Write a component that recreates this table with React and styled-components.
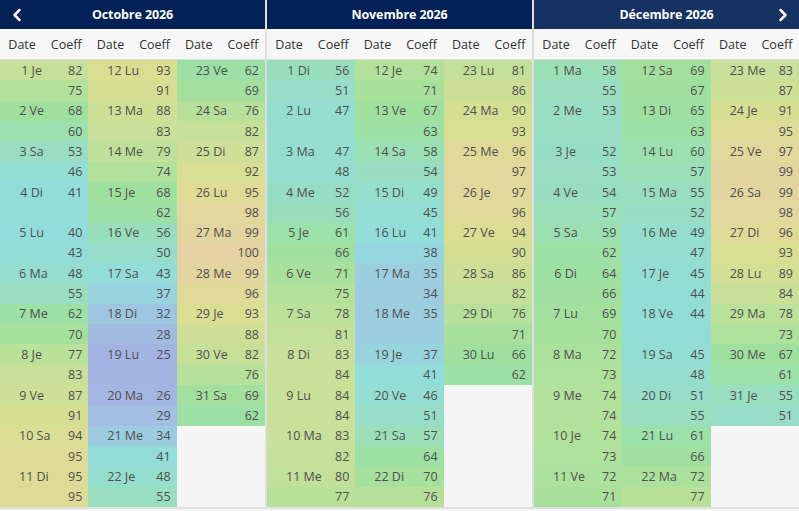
import React from "react";
import styled, { createGlobalStyle } from "styled-components";
import { ChevronLeft, ChevronRight } from "lucide-react";

const GlobalStyle = createGlobalStyle`
  html, body {
    margin: 0;
    padding: 0;
    background: #f5f5f5;
  }
  body {
    font-family: "Open Sans", "Noto Sans", Arial, sans-serif;
    -webkit-font-smoothing: antialiased;
  }
`;

// coefficient -> heatmap colour
const stops = [
  [25, [164, 180, 226]],
  [30, [161, 192, 225]],
  [35, [156, 206, 224]],
  [40, [146, 220, 220]],
  [47, [148, 221, 208]],
  [53, [152, 221, 196]],
  [58, [154, 223, 182]],
  [62, [156, 224, 166]],
  [68, [160, 224, 158]],
  [75, [180, 225, 154]],
  [82, [198, 224, 154]],
  [88, [208, 223, 150]],
  [93, [218, 222, 146]],
  [96, [224, 218, 152]],
  [99, [227, 213, 160]],
  [100, [230, 210, 162]],
];

const coeffColor = (c) => {
  if (c <= stops[0][0]) return `rgb(${stops[0][1].join(",")})`;
  for (let i = 1; i < stops.length; i++) {
    const [v1, col1] = stops[i];
    const [v0, col0] = stops[i - 1];
    if (c <= v1) {
      const t = (c - v0) / (v1 - v0);
      const rgb = col0.map((x, k) => Math.round(x + (col1[k] - x) * t));
      return `rgb(${rgb.join(",")})`;
    }
  }
  return `rgb(${stops[stops.length - 1][1].join(",")})`;
};

const months = [
  {
    name: "Octobre 2026",
    prev: true,
    days: [
      [1, "Je", 82, 75], [2, "Ve", 68, 60], [3, "Sa", 53, 46], [4, "Di", 41, null],
      [5, "Lu", 40, 43], [6, "Ma", 48, 55], [7, "Me", 62, 70], [8, "Je", 77, 83],
      [9, "Ve", 87, 91], [10, "Sa", 94, 95], [11, "Di", 95, 95],
      [12, "Lu", 93, 91], [13, "Ma", 88, 83], [14, "Me", 79, 74], [15, "Je", 68, 62],
      [16, "Ve", 56, 50], [17, "Sa", 43, 37], [18, "Di", 32, 28], [19, "Lu", 25, null],
      [20, "Ma", 26, 29], [21, "Me", 34, 41], [22, "Je", 48, 55],
      [23, "Ve", 62, 69], [24, "Sa", 76, 82], [25, "Di", 87, 92], [26, "Lu", 95, 98],
      [27, "Ma", 99, 100], [28, "Me", 99, 96], [29, "Je", 93, 88], [30, "Ve", 82, 76],
      [31, "Sa", 69, 62],
    ],
  },
  {
    name: "Novembre 2026",
    days: [
      [1, "Di", 56, 51], [2, "Lu", 47, null], [3, "Ma", 47, 48], [4, "Me", 52, 56],
      [5, "Je", 61, 66], [6, "Ve", 71, 75], [7, "Sa", 78, 81], [8, "Di", 83, 84],
      [9, "Lu", 84, 84], [10, "Ma", 83, 82], [11, "Me", 80, 77],
      [12, "Je", 74, 71], [13, "Ve", 67, 63], [14, "Sa", 58, 54], [15, "Di", 49, 45],
      [16, "Lu", 41, 38], [17, "Ma", 35, 34], [18, "Me", 35, null], [19, "Je", 37, 41],
      [20, "Ve", 46, 51], [21, "Sa", 57, 64], [22, "Di", 70, 76],
      [23, "Lu", 81, 86], [24, "Ma", 90, 93], [25, "Me", 96, 97], [26, "Je", 97, 96],
      [27, "Ve", 94, 90], [28, "Sa", 86, 82], [29, "Di", 76, 71], [30, "Lu", 66, 62],
    ],
  },
  {
    name: "Décembre 2026",
    next: true,
    active: true,
    days: [
      [1, "Ma", 58, 55], [2, "Me", 53, null], [3, "Je", 52, 53], [4, "Ve", 54, 57],
      [5, "Sa", 59, 62], [6, "Di", 64, 66], [7, "Lu", 69, 70], [8, "Ma", 72, 73],
      [9, "Me", 74, 74], [10, "Je", 74, 73], [11, "Ve", 72, 71],
      [12, "Sa", 69, 67], [13, "Di", 65, 63], [14, "Lu", 60, 57], [15, "Ma", 55, 52],
      [16, "Me", 49, 47], [17, "Je", 45, 44], [18, "Ve", 44, null], [19, "Sa", 45, 48],
      [20, "Di", 51, 55], [21, "Lu", 61, 66], [22, "Ma", 72, 77],
      [23, "Me", 83, 87], [24, "Je", 91, 95], [25, "Ve", 97, 99], [26, "Sa", 99, 98],
      [27, "Di", 96, 93], [28, "Lu", 89, 84], [29, "Ma", 78, 73], [30, "Me", 67, 61],
      [31, "Je", 55, 51],
    ],
  },
];

const Page = styled.div`
  display: grid;
  grid-template-columns: repeat(3, 1fr);
  column-gap: 2px;
  background: #dedede;
  border-bottom: 2px solid #e0e0e0;
`;

const Panel = styled.section`
  display: flex;
  flex-direction: column;
  background: #f5f5f5;
  min-width: 0;
`;

const MonthBar = styled.div`
  display: grid;
  grid-template-columns: 33px 1fr 33px;
  align-items: center;
  height: 29px;
  background: ${(p) => (p.$active ? "#153262" : "#012157")};
  color: #ffffff;
`;

const MonthTitle = styled.div`
  grid-column: 2;
  text-align: center;
  font-size: 12.5px;
  font-weight: 700;
  letter-spacing: -0.1px;
`;

const NavButton = styled.button`
  display: flex;
  align-items: center;
  justify-content: center;
  border: none;
  background: none;
  padding: 0;
  color: #ffffff;
  cursor: pointer;
  grid-column: ${(p) => (p.$side === "right" ? 3 : 1)};
  grid-row: 1;
`;

const HeadRow = styled.div`
  display: grid;
  grid-template-columns: repeat(3, 1fr);
  height: 30px;
  background: #f7f7f7;
  border-bottom: 1px solid #dcdcdc;
`;

const HeadGroup = styled.div`
  display: grid;
  grid-template-columns: 1fr 1fr;
  align-items: center;
`;

const HeadCell = styled.div`
  text-align: center;
  font-size: 12.5px;
  color: #333333;
`;

const Body = styled.div`
  display: grid;
  grid-template-columns: repeat(3, 1fr);
  align-items: start;
`;

const DayColumn = styled.div`
  display: flex;
  flex-direction: column;
`;

const Row = styled.div`
  display: grid;
  grid-template-columns: 1fr 1fr;
  align-items: center;
  height: 20.32px;
  background: ${(p) => p.$bg};
  font-size: 12.5px;
  color: #4f4f4f;
`;

const DateCell = styled.span`
  text-align: center;
  padding-left: 19px;
  white-space: nowrap;
`;

const CoeffCell = styled.span`
  text-align: right;
  padding-right: 6px;
`;

function DayRows({ day }) {
  const [num, name, c1, c2] = day;
  return (
    <>
      <Row $bg={coeffColor(c1)}>
        <DateCell>{`${num} ${name}`}</DateCell>
        <CoeffCell>{c1}</CoeffCell>
      </Row>
      <Row $bg={coeffColor(c2 ?? c1)}>
        <DateCell />
        <CoeffCell>{c2 ?? ""}</CoeffCell>
      </Row>
    </>
  );
}

function Month({ month }) {
  const cols = [month.days.slice(0, 11), month.days.slice(11, 22), month.days.slice(22)];
  return (
    <Panel>
      <MonthBar $active={month.active}>
        {month.prev && (
          <NavButton $side="left" aria-label="Mois précédent">
            <ChevronLeft size={20} strokeWidth={3} />
          </NavButton>
        )}
        <MonthTitle>{month.name}</MonthTitle>
        {month.next && (
          <NavButton $side="right" aria-label="Mois suivant">
            <ChevronRight size={20} strokeWidth={3} />
          </NavButton>
        )}
      </MonthBar>
      <HeadRow>
        {[0, 1, 2].map((i) => (
          <HeadGroup key={i}>
            <HeadCell>Date</HeadCell>
            <HeadCell>Coeff</HeadCell>
          </HeadGroup>
        ))}
      </HeadRow>
      <Body>
        {cols.map((days, i) => (
          <DayColumn key={i}>
            {days.map((d) => (
              <DayRows key={d[0]} day={d} />
            ))}
          </DayColumn>
        ))}
      </Body>
    </Panel>
  );
}

export default function App() {
  return (
    <>
      <GlobalStyle />
      <Page>
        {months.map((m) => (
          <Month key={m.name} month={m} />
        ))}
      </Page>
    </>
  );
}
